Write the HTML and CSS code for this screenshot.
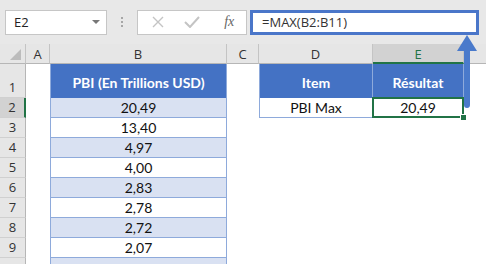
FILE: index.html
```html
<!DOCTYPE html>
<html lang="fr">
<head>
  <meta charset="UTF-8" />
  <meta name="viewport" content="width=device-width, initial-scale=1.0" />
  <title>MAX - Excel</title>
  <link rel="stylesheet" href="styles.css">
</head>
<body>
  <!-- Barre de formule -->
  <div class="formula-bar">
    <div class="name-box">
      <span>E2</span>
      <span class="caret"></span>
    </div>
    <div class="grip"><i></i><i></i><i></i></div>
    <div class="fx-box">
      <span class="btn cancel">
        <svg width="12" height="12" viewBox="0 0 12 12"><path d="M1 1 L11 11 M11 1 L1 11" stroke="#c4c4c4" stroke-width="1.4" fill="none"/></svg>
      </span>
      <span class="btn ok">
        <svg width="16" height="12" viewBox="0 0 16 12"><path d="M1 6 L6 11 L15 1" stroke="#c4c4c4" stroke-width="2" fill="none"/></svg>
      </span>
      <span class="btn fx">fx</span>
    </div>
    <div class="formula-input">=MAX(B2:B11)</div>
  </div>

  <!-- Feuille -->
  <div class="sheet">
    <div class="row hd-row">
      <div class="cell c-hd corner"></div>
      <div class="cell c-a col-hd">A</div>
      <div class="cell c-b col-hd">B</div>
      <div class="cell c-c col-hd">C</div>
      <div class="cell c-d col-hd">D</div>
      <div class="cell c-e col-hd active">E</div>
      <div class="cell c-f col-hd"></div>
    </div>
    <div class="row r1">
      <div class="cell c-hd row-hd">1</div>
      <div class="cell c-a"></div>
      <div class="cell c-b th">PBI (En Trillions USD)</div>
      <div class="cell c-c"></div>
      <div class="cell c-d th">Item</div>
      <div class="cell c-e th">Résultat</div>
      <div class="cell c-f"></div>
    </div>
    <div class="row">
      <div class="cell c-hd row-hd active">2</div>
      <div class="cell c-a"></div>
      <div class="cell c-b td alt">20,49</div>
      <div class="cell c-c"></div>
      <div class="cell c-d td">PBI Max</div>
      <div class="cell c-e td selected">20,49<span class="handle"></span></div>
      <div class="cell c-f"></div>
    </div>
    <div class="row">
      <div class="cell c-hd row-hd">3</div>
      <div class="cell c-a"></div>
      <div class="cell c-b td">13,40</div>
      <div class="cell c-c"></div><div class="cell c-d"></div><div class="cell c-e"></div><div class="cell c-f"></div>
    </div>
    <div class="row">
      <div class="cell c-hd row-hd">4</div>
      <div class="cell c-a"></div>
      <div class="cell c-b td alt">4,97</div>
      <div class="cell c-c"></div><div class="cell c-d"></div><div class="cell c-e"></div><div class="cell c-f"></div>
    </div>
    <div class="row">
      <div class="cell c-hd row-hd">5</div>
      <div class="cell c-a"></div>
      <div class="cell c-b td">4,00</div>
      <div class="cell c-c"></div><div class="cell c-d"></div><div class="cell c-e"></div><div class="cell c-f"></div>
    </div>
    <div class="row">
      <div class="cell c-hd row-hd">6</div>
      <div class="cell c-a"></div>
      <div class="cell c-b td alt">2,83</div>
      <div class="cell c-c"></div><div class="cell c-d"></div><div class="cell c-e"></div><div class="cell c-f"></div>
    </div>
    <div class="row">
      <div class="cell c-hd row-hd">7</div>
      <div class="cell c-a"></div>
      <div class="cell c-b td">2,78</div>
      <div class="cell c-c"></div><div class="cell c-d"></div><div class="cell c-e"></div><div class="cell c-f"></div>
    </div>
    <div class="row">
      <div class="cell c-hd row-hd">8</div>
      <div class="cell c-a"></div>
      <div class="cell c-b td alt">2,72</div>
      <div class="cell c-c"></div><div class="cell c-d"></div><div class="cell c-e"></div><div class="cell c-f"></div>
    </div>
    <div class="row">
      <div class="cell c-hd row-hd">9</div>
      <div class="cell c-a"></div>
      <div class="cell c-b td">2,07</div>
      <div class="cell c-c"></div><div class="cell c-d"></div><div class="cell c-e"></div><div class="cell c-f"></div>
    </div>
    <div class="row">
      <div class="cell c-hd row-hd"></div>
      <div class="cell c-a"></div>
      <div class="cell c-b td alt"></div>
      <div class="cell c-c"></div><div class="cell c-d"></div><div class="cell c-e"></div><div class="cell c-f"></div>
    </div>
  </div>

  <!-- Flèche vers la formule -->
  <svg class="arrow" width="24" height="74" viewBox="0 0 24 74">
    <path d="M12 0 L22 16 L15 16 L15 70 Q15 73 12 73 Q9 73 9 70 L9 16 L2 16 Z" fill="#4a7acb"/>
  </svg>
</body>
</html>
```

FILE: styles.css
```css
/* ===== Général ===== */
body {
  margin: 0;
  background: #ffffff;
  font-family: Lato, "Open Sans", sans-serif;
  overflow: hidden;
  position: relative;
  width: 486px;
  height: 264px;
}

/* ===== Barre de formule ===== */
.formula-bar {
  display: flex;
  align-items: center;
  height: 44px;
  padding: 0 7px 0 5px;
  box-sizing: border-box;
  background: #e8e8e8;
  font-family: "Open Sans", sans-serif;
}
.name-box {
  display: flex;
  align-items: center;
  justify-content: space-between;
  width: 102px;
  height: 25px;
  padding: 0 6px 0 8px;
  box-sizing: border-box;
  background: #fff;
  border: 1px solid #c6c6c6;
  font-size: 13px;
  color: #222;
}
.caret {
  width: 0;
  height: 0;
  border-left: 4px solid transparent;
  border-right: 4px solid transparent;
  border-top: 4px solid #777;
}
.grip {
  width: 30px;
  display: flex;
  flex-direction: column;
  align-items: center;
  gap: 2px;
}
.grip i {
  width: 2px;
  height: 2px;
  background: #a6a6a6;
}
.fx-box {
  display: flex;
  align-items: center;
  width: 110px;
  height: 25px;
  box-sizing: border-box;
  background: #fff;
  border: 1px solid #c6c6c6;
}
.btn {
  width: 34px;
  display: flex;
  justify-content: center;
  align-items: center;
}
.cancel { margin-left: 3px; }
.fx {
  margin-left: 4px;
  font-family: "Liberation Serif", serif;
  font-style: italic;
  font-size: 14px;
  color: #666;
}
.formula-input {
  flex: 1;
  height: 25px;
  margin-left: 3px;
  padding-left: 9px;
  box-sizing: border-box;
  background: #fff;
  border: 3px solid #4a76c9;
  font-size: 13px;
  line-height: 19px;
  color: #333;
}

/* ===== Feuille ===== */
.row {
  display: flex;
  height: 20px;
}
.row.r1 { height: 34px; }
.cell {
  box-sizing: border-box;
  flex-shrink: 0;
  display: flex;
  align-items: center;
  justify-content: center;
  font-size: 14px;
  color: #111;
}
.c-hd { width: 26px; }
.c-a { width: 24px; }
.c-b { width: 177px; }
.c-c { width: 32px; }
.c-d { width: 114px; }
.c-e { width: 91px; }
.c-f { flex: 1; }

/* En-têtes */
.hd-row .cell {
  background: #e6e6e6;
  border-right: 1px solid #c4c4c4;
  border-bottom: 1px solid #b6b6b6;
  font-family: "Open Sans", sans-serif;
  font-size: 13px;
  color: #333;
  padding-top: 1px;
}
.hd-row .c-f { border-right: none; }
.corner { position: relative; }
.corner::after {
  content: "";
  position: absolute;
  right: 4px;
  bottom: 3px;
  border-left: 11px solid transparent;
  border-bottom: 11px solid #bcbcbc;
}
.col-hd.active {
  background: #d2d2d2;
  border-bottom: 2px solid #217346;
  color: #217346;
}
.row-hd {
  background: #e6e6e6;
  border-right: 1px solid #b6b6b6;
  border-bottom: 1px solid #d0d0d0;
  font-family: "Open Sans", sans-serif;
  font-size: 13px;
  color: #333;
  align-items: flex-end;
  padding-bottom: 1px;
}
.row-hd.active {
  background: #d2d2d2;
  border-right: 2px solid #217346;
}

/* Tableaux */
.th {
  background: #4472c4;
  color: #fff;
  font-weight: bold;
  border-right: 1px solid #8eaadb;
  padding-top: 2px;
}
.c-b.th { border-left: 1px solid #8eaadb; }
.c-d.th { border-left: 1px solid #8eaadb; }
.td {
  background: #fff;
  border-right: 1px solid #8eaadb;
  border-bottom: 1px solid #8eaadb;
}
.c-b.td, .c-d.td { border-left: 1px solid #8eaadb; }
.td.alt { background: #d9e1f2; }

/* Cellule sélectionnée */
.selected { position: relative; }
.selected::after {
  content: "";
  position: absolute;
  top: -1px;
  left: -1px;
  right: -1px;
  bottom: -1px;
  border: 2px solid #217346;
}
.handle {
  position: absolute;
  right: -4px;
  bottom: -4px;
  width: 5px;
  height: 5px;
  background: #217346;
  border: 1px solid #fff;
  z-index: 2;
}

/* Flèche */
.arrow {
  position: absolute;
  left: 455px;
  top: 35px;
}
```
